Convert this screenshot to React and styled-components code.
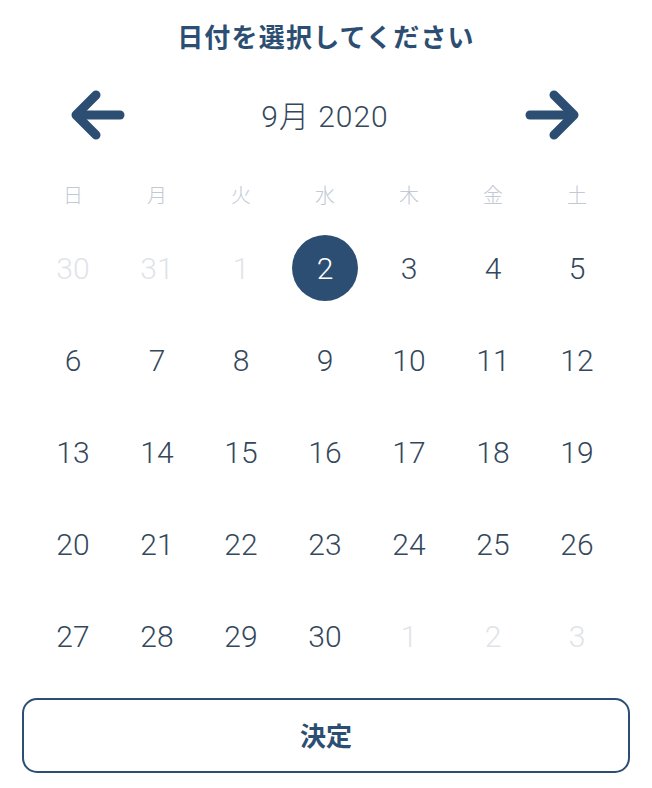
import React from "react";
import styled, { createGlobalStyle } from "styled-components";

const Global = createGlobalStyle`
  html, body { margin: 0; padding: 0; background: #ffffff; }
  body { font-family: "Liberation Sans", "Noto Sans CJK JP", sans-serif; }
`;

const NAVY = "#2c4e72";
const TEXT = "#34475b";
const FADED = "#dfe4ea";
const WEEK = "#c0c9d4";

const Page = styled.div`
  width: 652px;
  height: 788px;
  display: flex;
  flex-direction: column;
  box-sizing: border-box;
  padding-top: 18px;
`;

const Title = styled.h1`
  margin: 0;
  height: 36px;
  line-height: 36px;
  text-align: center;
  font-family: "Noto Sans CJK JP", sans-serif;
  font-weight: 700;
  font-size: 26px;
  letter-spacing: 1.2px;
  color: ${NAVY};
`;

const MonthBar = styled.div`
  margin-top: 31px;
  height: 60px;
  display: flex;
  align-items: center;
  justify-content: space-between;
  padding: 0 73px 0 71px;
`;

const ArrowButton = styled.button`
  border: 0;
  background: none;
  padding: 0;
  width: 54px;
  height: 50px;
  display: flex;
  cursor: pointer;
`;

const MonthLabel = styled.div`
  font-family: "Roboto", "Noto Sans CJK JP", sans-serif;
  font-weight: 300;
  font-size: 30px;
  letter-spacing: 1px;
  color: ${TEXT};
  padding-bottom: 2px;
`;

const Grid = styled.div`
  display: grid;
  grid-template-columns: repeat(7, 84px);
  padding-left: 31px;
`;

const WeekRow = styled(Grid)`
  margin-top: 34px;
  height: 30px;
  align-items: center;
`;

const WeekCell = styled.div`
  text-align: center;
  font-family: "Noto Sans CJK JP", sans-serif;
  font-weight: 300;
  font-size: 20px;
  color: ${WEEK};
`;

const DayGrid = styled(Grid)`
  margin-top: 13px;
  grid-auto-rows: 92px;
`;

const DayCell = styled.div`
  display: flex;
  align-items: center;
  justify-content: center;
`;

const DayNum = styled.span`
  width: 66px;
  height: 66px;
  border-radius: 50%;
  display: flex;
  align-items: center;
  justify-content: center;
  font-family: "Roboto", "Liberation Sans", sans-serif;
  font-weight: 300;
  font-size: 30px;
  color: ${(p) => (p.$selected ? "#ffffff" : p.$muted ? FADED : TEXT)};
  background: ${(p) => (p.$selected ? NAVY : "transparent")};
`;

const Confirm = styled.button`
  margin: 16px 0 0 22px;
  width: 608px;
  height: 75px;
  box-sizing: border-box;
  border: 2px solid ${NAVY};
  border-radius: 15px;
  background: #ffffff;
  color: ${NAVY};
  font-family: "Noto Sans CJK JP", sans-serif;
  font-weight: 700;
  font-size: 26px;
  line-height: 1;
  padding: 0 0 2px;
  cursor: pointer;
`;

const Arrow = ({ dir }) => (
  <svg width="54" height="50" viewBox="0 0 54 50" fill="none">
    <g
      stroke={NAVY}
      strokeWidth="9"
      strokeLinecap="round"
      strokeLinejoin="round"
      transform={dir === "right" ? "translate(54 0) scale(-1 1)" : undefined}
    >
      <path d="M25 5 L5 25 L25 45" />
      <path d="M6 25 H49" />
    </g>
  </svg>
);

const weekdays = ["日", "月", "火", "水", "木", "金", "土"];

const days = [
  ...[30, 31].map((d) => ({ d, muted: true })),
  ...Array.from({ length: 30 }, (_, i) => ({ d: i + 1, muted: false })),
  ...[1, 2, 3].map((d) => ({ d, muted: true })),
];
// Sept 1 is shown faded in the reference
days[2].muted = true;

export default function App() {
  return (
    <>
      <Global />
      <Page>
        <Title>日付を選択してください</Title>
        <MonthBar>
          <ArrowButton aria-label="前の月">
            <Arrow dir="left" />
          </ArrowButton>
          <MonthLabel>9月 2020</MonthLabel>
          <ArrowButton aria-label="次の月">
            <Arrow dir="right" />
          </ArrowButton>
        </MonthBar>
        <WeekRow>
          {weekdays.map((w) => (
            <WeekCell key={w}>{w}</WeekCell>
          ))}
        </WeekRow>
        <DayGrid>
          {days.map((x, i) => (
            <DayCell key={i}>
              <DayNum $muted={x.muted} $selected={!x.muted && x.d === 2 && i < 7}>
                {x.d}
              </DayNum>
            </DayCell>
          ))}
        </DayGrid>
        <Confirm>決定</Confirm>
      </Page>
    </>
  );
}
